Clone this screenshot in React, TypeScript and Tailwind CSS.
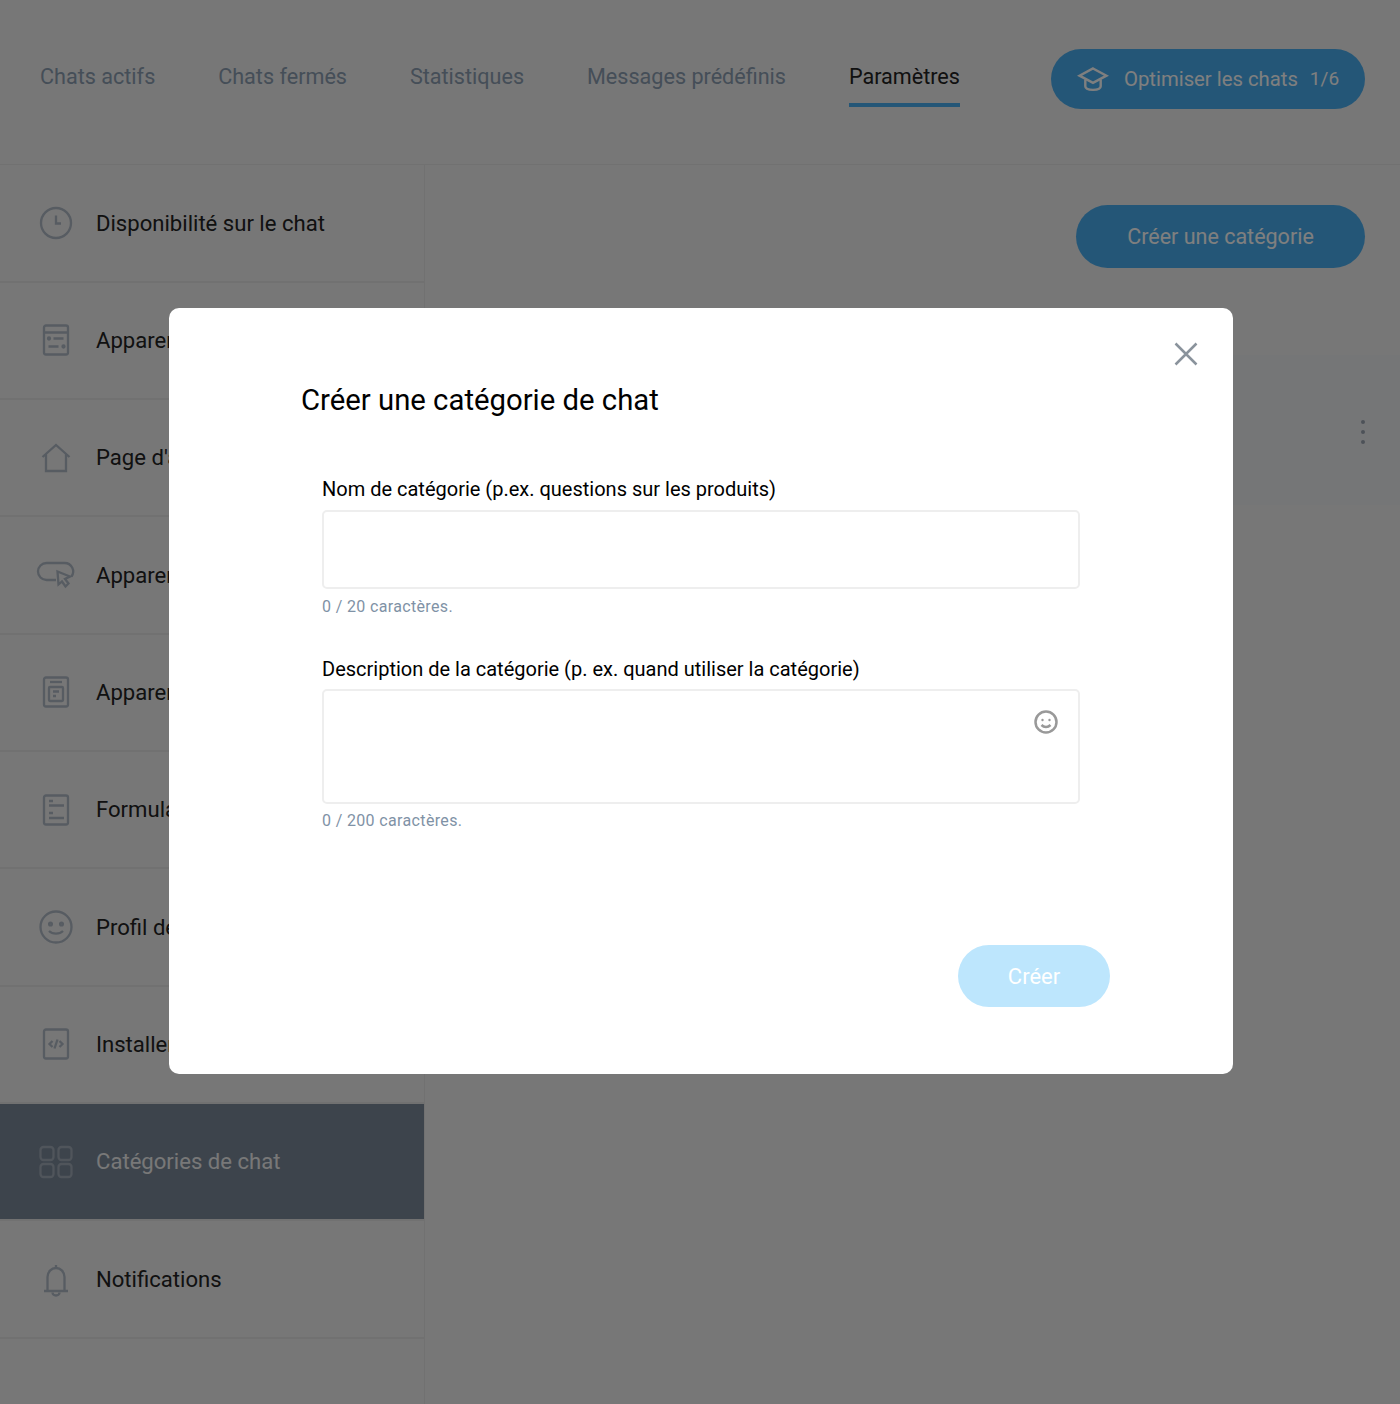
import { ReactNode } from "react";

const icons: Record<string, ReactNode> = {
  clock: (
    <>
      <circle cx="16.500" cy="16" r="15" />
      <path d="M16.500 8.500v8h5" />
    </>
  ),
  widget: (
    <>
      <rect x="4.500" y="1.500" width="24" height="29" rx="2" />
      <path d="M4.500 8.500h24M14 14.500h10M9 22.500h10" />
      <circle cx="9.500" cy="14.500" r="1" />
      <circle cx="24" cy="22.500" r="1" />
    </>
  ),
  home: <path d="M3 15 16.500 3 30 15M6.500 12.500V29h20V12.500" />,
  button: (
    <>
      <path d="M19 21H9.500a8.500 8.500 0 0 1 0-17h18a8.500 8.500 0 0 1 7 13.500" />
      <path d="m20.500 12.500 12.500 5-5 2.500 3.500 4.500-3 3-3.500-5-3.500 3z" />
    </>
  ),
  page: (
    <>
      <rect x="4.500" y="1.500" width="24" height="29" rx="2" />
      <path d="M10.500 6h12" />
      <rect x="9.500" y="11" width="14" height="14" rx="1" />
      <path d="M13.500 15.500h6M13.500 20h3" />
    </>
  ),
  form: (
    <>
      <rect x="4.500" y="1.500" width="24" height="29" rx="2" />
      <path d="M9.500 7h4M9.500 11.500h15M9.500 19h4M9.500 24h15" />
    </>
  ),
  smile: (
    <>
      <circle cx="16.500" cy="16" r="15.500" />
      <circle cx="11" cy="13" r="1.400" />
      <circle cx="22" cy="13" r="1.400" />
      <path d="M9.500 20c3.500 3.500 10.500 3.500 14 0" />
    </>
  ),
  code: (
    <>
      <rect x="4.500" y="1.500" width="24" height="29" rx="2" />
      <path d="m13 13-3 3 3 3M20 13l3 3-3 3M18 11.500l-3 9" />
    </>
  ),
  grid: (
    <>
      <rect x="1" y="1" width="13" height="13" rx="3" />
      <rect x="19" y="1" width="13" height="13" rx="3" />
      <rect x="1" y="18" width="13" height="13" rx="3" />
      <rect x="19" y="18" width="13" height="13" rx="3" />
    </>
  ),
  bell: (
    <>
      <path d="M8 28V14a8.500 9 0 0 1 17 0v14M4.500 28h24" />
      <path d="M13 29.500a3.500 3 0 0 0 7 0M16.500 2v3" />
    </>
  ),
};

const rows = [
  { icon: "clock", label: "Disponibilité sur le chat" },
  { icon: "widget", label: "Apparence du widget" },
  { icon: "home", label: "Page d'accueil" },
  { icon: "button", label: "Apparence du bouton" },
  { icon: "page", label: "Apparence de la page" },
  { icon: "form", label: "Formulaire" },
  { icon: "smile", label: "Profil de l'agent" },
  { icon: "code", label: "Installer le chat" },
  { icon: "grid", label: "Catégories de chat", active: true },
  { icon: "bell", label: "Notifications" },
];

const tabs = ["Chats actifs", "Chats fermés", "Statistiques", "Messages prédéfinis", "Paramètres"];

function RowIcon({ name }: { name: string }) {
  return (
    <svg
      viewBox={name === "button" ? "0 0 38 32" : "0 0 33 32"}
      fill="none"
      stroke="currentColor"
      strokeWidth="2.300"
      className="h-[32px] w-[38px] overflow-visible"
    >
      {icons[name]}
    </svg>
  );
}

export default function App() {
  return (
    <div className="relative h-[1404px] overflow-hidden bg-[#eeeeee] font-['Roboto',sans-serif]">
      <header className="flex h-[165px] items-start justify-between border-b border-[#e2e2e2] pl-[40px] pr-[35px] pt-[49px]">
        <nav className="mt-[12px] flex gap-[62.900px]">
          {tabs.map((tab) => (
            <span
              key={tab}
              className={
                tab === "Paramètres"
                  ? "border-b-4 border-[#49adee] pb-[10px] text-[21.600px] leading-[32px] text-[#222]"
                  : "border-b-4 border-transparent pb-[10px] text-[21.600px] leading-[32px] text-[#8a9cb0]"
              }
            >
              {tab}
            </span>
          ))}
        </nav>
        <button
          type="button"
          className="flex h-[60px] w-[314px] items-center rounded-full bg-[#49adee] pl-[26px] text-[20.300px] text-white"
        >
          <svg viewBox="0 0 32 26" fill="none" stroke="currentColor" strokeWidth="2.500" className="mr-[15px] h-[25px] w-[32px]">
            <path d="m16 1.500 14 7.500-14 7.500L2 9z" />
            <path d="M8 13v7c0 5 16 5 16 0v-7" />
          </svg>
          <span>Optimiser les chats</span>
          <span className="ml-[12px] text-[19px]">1/6</span>
        </button>
      </header>

      <div className="flex">
        <aside className="h-[1239px] w-[425px] border-r border-[#e2e2e2] pt-[0.500px]">
          {rows.map((row) => (
            <div
              key={row.label}
              className={
                row.active
                  ? "flex h-[117.330px] items-center gap-[21px] border-b-2 border-[#e2e2e2] bg-[#7a8899] pl-[37px] text-[22.100px] text-[#f0f0f0]"
                  : "flex h-[117.330px] items-center gap-[21px] border-b-2 border-[#e2e2e2] pl-[37px] text-[22.100px] text-[#222]"
              }
            >
              <span className={row.active ? "text-[#a0aab6]" : "text-[#aeb8c4]"}>
                <RowIcon name={row.icon} />
              </span>
              <span className="whitespace-nowrap">{row.label}</span>
            </div>
          ))}
        </aside>
        <main className="flex-1 pr-[35px] pt-[40px]">
          <div className="flex justify-end">
            <button
              type="button"
              className="h-[63px] w-[289px] rounded-full bg-[#49adee] pt-[1px] text-[21.500px] text-white"
            >
              Créer une catégorie
            </button>
          </div>
          <div className="mt-[87px] mr-[-35px] flex h-[150px] items-center justify-end bg-[#ebecee] pr-[35px] pt-[4px]">
            <div className="flex flex-col gap-[6px]">
              <span className="block h-[4px] w-[4px] rounded-full bg-[#9aa5b1]" />
              <span className="block h-[4px] w-[4px] rounded-full bg-[#9aa5b1]" />
              <span className="block h-[4px] w-[4px] rounded-full bg-[#9aa5b1]" />
            </div>
          </div>
        </main>
      </div>

      <div className="absolute inset-0 bg-black/50" />

      <div className="absolute left-[169px] top-[308px] h-[766px] w-[1064px] rounded-[10px] bg-white pl-[132px] pt-[72px]">
        <button type="button" className="absolute right-[35px] top-[34px] text-[#8a939c]">
          <svg viewBox="0 0 24 24" fill="none" stroke="currentColor" strokeWidth="2.500" className="h-[24px] w-[24px]">
            <path d="m1.500 1.500 21 21M22.500 1.500l-21 21" />
          </svg>
        </button>
        <h2 className="text-[29.300px] leading-[40px] text-black">Créer une catégorie de chat</h2>
        <div className="mt-[57px] w-[779px] pl-[21px]">
          <label className="block text-[20px] leading-[24px] text-black">
            Nom de catégorie (p.ex. questions sur les produits)
          </label>
          <div className="mt-[9px] h-[79px] w-[758px] rounded-[5px] border-2 border-[#eeeeee]" />
          <p className="mt-[8px] text-[16px] leading-[20px] tracking-[0.350px] text-[#7f92a6]">0 / 20 caractères.</p>
          <label className="mt-[40px] block text-[20px] leading-[24px] text-black">
            Description de la catégorie (p. ex. quand utiliser la catégorie)
          </label>
          <div className="relative mt-[8px] h-[115px] w-[758px] rounded-[5px] border-2 border-[#eeeeee]">
            <svg viewBox="0 0 24 24" fill="none" stroke="#999999" strokeWidth="2.500" className="absolute right-[20px] top-[19px] h-[24px] w-[24px]">
              <circle cx="12" cy="12" r="10.500" />
              <circle cx="8.500" cy="10" r="1.200" fill="#999999" stroke="none" />
              <circle cx="15.500" cy="10" r="1.200" fill="#999999" stroke="none" />
              <path d="M7.500 15c2.500 2.500 6.500 2.500 9 0" />
            </svg>
          </div>
          <p className="mt-[7px] text-[16px] leading-[20px] tracking-[0.350px] text-[#7f92a6]">0 / 200 caractères.</p>
        </div>
        <div className="mt-[114px] flex w-[809px] justify-end">
          <button type="button" className="h-[62px] w-[152px] rounded-full bg-[#bde6fd] text-[22px] text-white">
            Créer
          </button>
        </div>
      </div>
    </div>
  );
}
